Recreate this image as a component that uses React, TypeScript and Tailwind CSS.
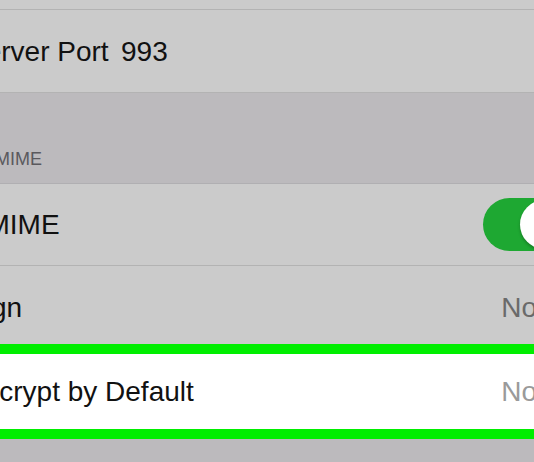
import React from "react";

export default function App() {
  const font = { fontFamily: '"Liberation Sans", Arial, sans-serif' };
  return (
    <div
      className="w-[534px] h-[462px] overflow-hidden bg-[#bcbabd] flex flex-col text-[#111111]"
      style={font}
    >
      {/* tail of previous cell */}
      <div className="h-[10px] bg-[#cbcbcb] border-b border-[#b3b3b3] shrink-0" />

      {/* Server Port */}
      <div className="h-[83px] shrink-0 bg-[#cbcbcb] border-b border-[#b3b3b3] flex items-center pt-[1px]">
        <span className="ml-[-33px] w-[154px] shrink-0 text-[28px] leading-none whitespace-nowrap">
          Server Port
        </span>
        <span className="text-[28px] leading-none">993</span>
      </div>

      {/* Section header */}
      <div className="h-[91px] shrink-0 bg-[#bcbabd] border-b border-[#b0afb2] flex items-end pb-[15px]">
        <span className="ml-[-22px] text-[18px] leading-none text-[#5a595e] whitespace-nowrap">
          S/MIME
        </span>
      </div>

      {/* S/MIME toggle row */}
      <div className="h-[82px] shrink-0 bg-[#cbcbcb] border-b border-[#b3b3b3] flex items-center justify-between">
        <span className="ml-[-40px] text-[28px] leading-none whitespace-nowrap">
          S/MIME
        </span>
        <div className="w-[88px] h-[53px] shrink-0 mr-[-37px] rounded-full bg-[#1ea832] flex items-center justify-end pr-[2px]">
          <div className="w-[49px] h-[49px] rounded-full bg-white shadow-[0_2px_3px_rgba(0,0,0,0.25)]" />
        </div>
      </div>

      {/* Sign row */}
      <div className="h-[78px] shrink-0 bg-[#cbcbcb] flex items-center justify-between pt-[6px]">
        <span className="ml-[-34px] text-[28px] leading-none whitespace-nowrap">
          Sign
        </span>
        <span className="mr-[-3px] text-[28px] leading-none text-[#6a6a6a] whitespace-nowrap">
          No
        </span>
      </div>

      {/* Encrypt by Default (highlighted) */}
      <div className="h-[95px] shrink-0 bg-white border-y-[10px] border-[#00ee00] flex items-center justify-between pt-[1px]">
        <span className="ml-[-35px] text-[28px] leading-none whitespace-nowrap">
          Encrypt by Default
        </span>
        <span className="mr-[-3px] text-[28px] leading-none text-[#9a9a9a] whitespace-nowrap">
          No
        </span>
      </div>

      <div className="flex-1 bg-[#bcbabd]" />
    </div>
  );
}
